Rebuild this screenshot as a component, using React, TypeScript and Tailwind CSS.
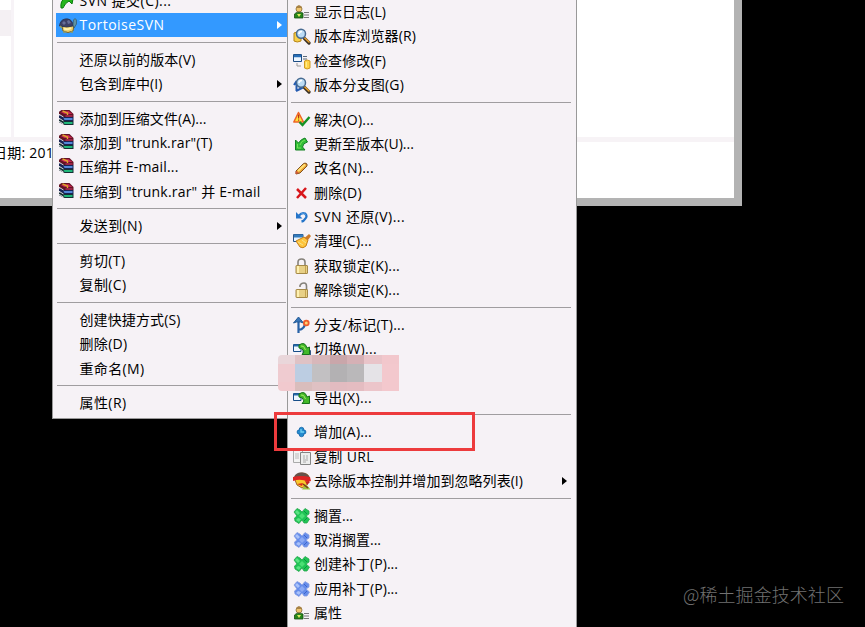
import { useLayoutEffect, useRef, useState } from "react";
import type { ReactNode } from "react";

type Item = {
    label: string;
    width: number;
    icon?: ReactNode;
    arrow?: boolean;
    active?: boolean;
};

type Entry = Item | "-";

const Icon = ({ children }: { children: ReactNode }) => (
    <svg viewBox="0 0 18 18" className="h-[18px] w-[18px]">
        {children}
    </svg>
);

const Commit = () => (
    <Icon>
        <path d="M2 16Q1 9 6 6L4 3L15 2L13 12L10 9Q6 11 4 16Z" fill="#25b51c" stroke="#087a0b" />
    </Icon>
);

const Tortoise = () => (
    <Icon>
        <path d="M3 10L15 9L14 15Q9 18 4 15Z" fill="#ecd06b" stroke="#7b6224" />
        <path d="M.5 10Q1 4 6 3Q12 2 14 8L14 10Q8 12 .5 10Z" fill="#3c4067" stroke="#27304c" strokeWidth=".8" />
        <path d="M3 7L5 5L7 7L5 9ZM8 5L10 4L12 7L9 8Z" fill="#666f98" />
        <path d="M14 9L14.5 4Q16 1 17.5 4V8L15 12Z" fill="#5f92a0" stroke="#31576b" strokeWidth=".7" />
        <path d="M5 12.5Q9 14 12 12" stroke="#fff2ac" strokeWidth="2" fill="none" />
        <path d="M1 10L3 12M4 16H7M12 16H14" stroke="#8d9c65" strokeWidth="1.5" />
    </Icon>
);

const Books = () => (
    <Icon>
        <g transform="translate(-1.5 -1)">
            <path d="M1 11L4 9L16 12V16H7L1 13Z" fill="#152f34" />
            <path d="M6 13H15V15H7Z" fill="#20b77a" />
            <path d="M1 7L4 5L16 8V12H7L1 9Z" fill="#182455" />
            <path d="M6 9H15V11H7Z" fill="#5487d8" />
            <path d="M1 3L4 1L12 1L16 5V8H7L1 5Z" fill="#631323" />
            <path d="M3 3L11 2L15 5H7Z" fill="#c72553" />
            <path d="M8 7H15" stroke="#d5376a" />
            <path d="M1 5L6 8M1 9L6 12M1 12L6 15" stroke="#eee" strokeWidth=".9" />
            <path d="M5 2L10 4V6" fill="none" stroke="#e0a62c" strokeWidth="1.4" />
        </g>
    </Icon>
);

const User = () => (
    <Icon>
        <circle cx="6" cy="6" r="3" fill="#efc46f" stroke="#795c25" strokeWidth=".7" />
        <path d="M3 5Q4 1 8 3L9 5" fill="#a98245" />
        <path d="M1.5 15V11Q4 8 10 10V15Z" fill="#258519" stroke="#164e12" strokeWidth=".8" />
        <path d="M4 11L6 14L8 11" fill="#ddeb64" />
        <path d="M11 9.5H16M11 12H16M11 14.5H16" stroke="#777" strokeWidth="1.2" />
    </Icon>
);

const Lens = () => (
    <>
        <path d="M11.5 11.5L16 16" stroke="#3e3325" strokeWidth="3.2" strokeLinecap="round" />
        <path d="M11.8 11L16 15" stroke="#e7a02c" strokeWidth="1.6" strokeLinecap="round" />
        <circle cx="8" cy="6.8" r="4.5" fill="#bcdcf5" stroke="#476a91" strokeWidth="1.5" />
        <path d="M6 7Q6 4.5 9 4.5" stroke="#fff" strokeWidth="1.5" fill="none" />
    </>
);

const Browser = () => (
    <Icon>
        <path d="M1 6Q4 4 8 6V14Q4 16 1 14Z" fill="#f7cf49" stroke="#b78517" />
        <Lens />
    </Icon>
);

const Graph = () => (
    <Icon>
        <path d="M1 9L3 6L5 9M3.5 6V15M3 15L9 12L5 9" fill="none" stroke="#245bb0" strokeWidth="2" />
        <Lens />
    </Icon>
);

const Check = () => (
    <Icon>
        <path d="M.5 2.5H8.5V9.5H.5Z" fill="#eef6ff" stroke="#1c4c83" />
        <path d="M1 4H8" stroke="#286eb7" strokeWidth="2.5" />
        <path d="M10 4.5H14M10 7H14" stroke="#596879" />
        <path d="M11.5 9Q14 7 17 9V16Q14 18 11.5 16Z" fill="#ffd449" stroke="#d29b20" />
        <path d="M4 11V14H8" fill="none" stroke="#999" />
        <path d="M13.3 10V15" stroke="#fff09a" />
    </Icon>
);

const Resolve = () => (
    <Icon>
        <path d="M5.5 1.5L10.5 11H.8Z" fill="#ffe23b" stroke="#ee6528" strokeWidth="1.5" strokeLinejoin="round" />
        <path d="M5.6 4V7.5M5.6 8.5V9.8" stroke="#b5331b" strokeWidth="1.2" />
        <path d="M6.5 11L9.5 14L16.5 6" fill="none" stroke="#159225" strokeWidth="2.4" />
    </Icon>
);

const Update = () => (
    <Icon>
        <path d="M2.5 5V15H12L9.5 12Q10 8 14.5 7L12 3Q8 4 5.5 8Z" fill="#31bd37" stroke="#128021" />
        <path d="M4.5 9V13H8M7 10Q8 6 12 5" fill="none" stroke="#76e258" />
    </Icon>
);

const Pencil = () => (
    <Icon>
        <path d="M3 12L10 5Q12 3 14 5L14 7L7 14L3 15Z" fill="#eca333" stroke="#81501e" />
        <path d="M5 12L12 5.5" stroke="#ffe075" strokeWidth="2" />
        <path d="M2.5 15L3 12L6 14Z" fill="#d4543a" />
    </Icon>
);

const Delete = () => (
    <Icon>
        <path d="M4 5L13 14M13 4L4 14" stroke="#d8161b" strokeWidth="2.5" />
    </Icon>
);

const Revert = () => (
    <Icon>
        <path d="M3 4V10.5H9.5Z" fill="#2575c9" />
        <path d="M6 7.5Q9 4 12 5.5Q15 8 12 11Q11 13 8.5 13.5" fill="none" stroke="#2575c9" strokeWidth="2.3" />
        <path d="M8 6Q11 4 13 7" fill="none" stroke="#5da5e7" strokeWidth=".8" />
    </Icon>
);

const Clean = () => (
    <Icon>
        <path d="M.5 2.5H10V9.5H.5Z" fill="#e7f3ff" stroke="#275385" />
        <path d="M1 4H10" stroke="#347cbd" strokeWidth="3" />
        <path d="M3 9L11 5L15 8L13 14Q10 17 7 15Z" fill="#ffc43c" stroke="#c58017" />
        <path d="M11.5 6L16 2L18 4L15 8Z" fill="#ce7b28" />
        <path d="M5 10L10 13M9 8L13 11" stroke="#f5e48b" />
    </Icon>
);

const Lock = ({ open }: { open?: boolean }) => (
    <Icon>
        <path
            d={open ? "M7 6V4.5Q8 2 11 2Q13.5 2 13.5 5V9" : "M5 9V5Q5 2 8.7 2Q12 2 12 5V9"}
            fill="none"
            stroke="#85817a"
            strokeWidth="1.6"
        />
        <rect x="3" y="8.5" width="11.5" height="8" rx=".5" fill="#e8d086" stroke="#a58947" />
        <path d="M5 9V16" stroke="#fff1b1" strokeWidth="2" />
        <path d="M12.5 9V16" stroke="#c5a34f" />
    </Icon>
);

const Branch = () => (
    <Icon>
        <path d="M5.5 17V4M5.5 14Q12 13 12 7" fill="none" stroke="#2761a6" strokeWidth="2.2" />
        <path d="M.5 7L5.5 1L10.5 7L7.5 6H3.5Z" fill="#3775b7" stroke="#235995" />
        <circle cx="13.3" cy="7" r="2.4" fill="#ffd071" stroke="#ed5b2d" strokeWidth="1.8" />
    </Icon>
);

const Export = ({ swap }: { swap?: boolean }) => (
    <Icon>
        <path d="M.5 4.5H8V11.5H.5Z" fill="#eef6ff" stroke="#164d88" />
        <path d="M1 5.5H8" stroke="#286ba7" strokeWidth="2" />
        {swap && <path d="M10 10.5H17.5V15H10Z" fill="#bfdcec" stroke="#315886" />}
        <path d="M6 5Q12 1 14 8L16.5 7V14.5H9L11 12Q10 8 6 8Z" fill="#43b929" stroke="#16711b" />
        <path d="M8 6Q11 5 12.5 10" stroke="#a4e767" fill="none" />
    </Icon>
);

const Add = () => (
    <Icon>
        <path d="M6.5 5Q8.5 3.5 10.5 5V7H12Q14 9 12 11H10.5V13Q8.5 14.5 6.5 13V11H5Q3 9 5 7H6.5Z" fill="#268bcf" stroke="#1266a9" strokeWidth=".8" />
        <path d="M8 6V9H11" stroke="#70d1f4" strokeWidth="1.3" fill="none" />
    </Icon>
);

const Copy = () => (
    <Icon>
        <path d="M.5 2.5H9.5V14.5H.5Z" fill="#f3f3f3" stroke="#aaa" />
        <path d="M2 6H6M2 8H6M2 10H6" stroke="#bbb" />
        <path d="M7.5 4.5H17.5V16.5H7.5Z" fill="#ededed" stroke="#858585" />
        <path d="M10 8H12M13 8H15M10 10H12M13 10H15M10 12H15M10 14H13" stroke="#aaa" />
    </Icon>
);

const Ignore = () => (
    <Icon>
        <path d="M2 8Q2 1 9 1Q17 1 16 8L14 13L9 16L4 13Z" fill="#f9c92c" stroke="#874514" strokeWidth=".8" />
        <path d="M1 5Q3 0 9 .5Q15 1 17 6L12 5Z" fill="#66524a" />
        <path d="M0 5Q8 3 17 5L18 9L15 10Q8 6 0 9Z" fill="#dd2424" />
        <path d="M4 12L10 11L9 14Z" fill="#d92c1c" />
        <path d="M12 9L17 10L14 13Z" fill="#c32320" />
        <path d="M10 16L13 12L17.5 17.5H9Z" fill="#9cc33f" />
        <path d="M10 12L15 16" stroke="#7c381c" strokeWidth="1.6" />
    </Icon>
);

const Patch = ({ blue }: { blue?: boolean }) => (
    <Icon>
        <path
            d="M1 5L4 1.5L7 3L9 5L12 1.5L16 4L16 7L13 9L16.5 12L14 16L11 16L9 13L6 16.5L2 14L1.5 11L4 9Z"
            fill={blue ? "#668dea" : "#20c455"}
            stroke={blue ? "#869de2" : "#26a64d"}
            strokeWidth=".8"
            strokeLinejoin="round"
        />
        <path d="M4 3L7 6L5 8L2 5ZM5 11L8 12L6 15L3 13Z" fill={blue ? "#a9c1fa" : "#5be383"} />
        <path d="M9 6L12 9L9 12L6 9Z" fill={blue ? "#8caaf3" : "#4bdf75"} />
        <path d="M11 4L14 7M11 14L14 11" stroke={blue ? "#3c64cd" : "#089640"} />
    </Icon>
);

const explorerMenu: Entry[] = [
    { label: "SVN 提交(C)...", width: 92, icon: <Commit /> },
    { label: "TortoiseSVN", width: 85, icon: <Tortoise />, arrow: true, active: true },
    "-",
    { label: "还原以前的版本(V)", width: 116 },
    { label: "包含到库中(I)", width: 83, arrow: true },
    "-",
    { label: "添加到压缩文件(A)...", width: 127, icon: <Books /> },
    { label: '添加到 "trunk.rar"(T)', width: 133, icon: <Books /> },
    { label: "压缩并 E-mail...", width: 99, icon: <Books /> },
    { label: '压缩到 "trunk.rar" 并 E-mail', width: 181, icon: <Books /> },
    "-",
    { label: "发送到(N)", width: 63, arrow: true },
    "-",
    { label: "剪切(T)", width: 46 },
    { label: "复制(C)", width: 47 },
    "-",
    { label: "创建快捷方式(S)", width: 101 },
    { label: "删除(D)", width: 48 },
    { label: "重命名(M)", width: 65 },
    "-",
    { label: "属性(R)", width: 47 },
];

const svnMenu: Entry[] = [
    { label: "显示日志(L)", width: 72, icon: <User /> },
    { label: "版本库浏览器(R)", width: 102, icon: <Browser /> },
    { label: "检查修改(F)", width: 72, icon: <Check /> },
    { label: "版本分支图(G)", width: 90, icon: <Graph /> },
    "-",
    { label: "解决(O)...", width: 60, icon: <Resolve /> },
    { label: "更新至版本(U)...", width: 100, icon: <Update /> },
    { label: "改名(N)...", width: 60, icon: <Pencil /> },
    { label: "删除(D)", width: 48, icon: <Delete /> },
    { label: "SVN 还原(V)...", width: 91, icon: <Revert /> },
    { label: "清理(C)...", width: 58, icon: <Clean /> },
    { label: "获取锁定(K)...", width: 86, icon: <Lock /> },
    { label: "解除锁定(K)...", width: 86, icon: <Lock open /> },
    "-",
    { label: "分支/标记(T)...", width: 91, icon: <Branch /> },
    { label: "切换(W)...", width: 63, icon: <Export swap /> },
    { label: "", width: 0 },
    { label: "导出(X)...", width: 58, icon: <Export /> },
    "-",
    { label: "增加(A)...", width: 58, icon: <Add /> },
    { label: "复制 URL", width: 60, icon: <Copy /> },
    { label: "去除版本控制并增加到忽略列表(I)", width: 209, icon: <Ignore />, arrow: true },
    "-",
    { label: "搁置...", width: 39, icon: <Patch /> },
    { label: "取消搁置...", width: 67, icon: <Patch blue /> },
    { label: "创建补丁(P)...", width: 84, icon: <Patch /> },
    { label: "应用补丁(P)...", width: 84, icon: <Patch blue /> },
    { label: "属性", width: 28, icon: <User /> },
];

// Spreads the letters so that the label takes exactly `width` pixels
function Label({ text, width }: { text: string; width: number }) {
    const ref = useRef<HTMLSpanElement>(null);
    const [spacing, setSpacing] = useState(0);

    useLayoutEffect(() => {
        if (!ref.current || !text) return;
        const natural = ref.current.getBoundingClientRect().width;
        setSpacing((width - natural) / text.length);
    }, [text, width]);

    return (
        <span ref={ref} className="whitespace-pre" style={{ letterSpacing: spacing }}>
            {text}
        </span>
    );
}

function Menu({ entries }: { entries: Entry[] }) {
    return (
        <div className="flex flex-col">
            {entries.map((entry, index) =>
                entry === "-" ? (
                    <div key={index} className="h-[10.3px] shrink-0 pt-[4.4px]">
                        <div className="mr-px ml-px h-px bg-[#a09da0]" />
                    </div>
                ) : (
                    <div
                        key={index}
                        className={`flex h-[24.33px] shrink-0 items-center ${entry.active ? "bg-[#3399ff] text-white" : "text-black"}`}
                    >
                        <div className="ml-[3px] flex w-[21px] shrink-0">{entry.icon}</div>
                        <Label text={entry.label} width={entry.width} />
                        {entry.arrow && (
                            <svg viewBox="0 0 5 8" className="mr-[5px] ml-auto h-2 w-[5px]">
                                <path d="M0 0L5 4L0 8Z" fill="currentColor" />
                            </svg>
                        )}
                    </div>
                )
            )}
        </div>
    );
}

export default function App() {
    return (
        <div className="relative h-[627px] w-[865px] overflow-hidden bg-black font-['Open_Sans','Noto_Sans_CJK_SC',sans-serif] text-[14px] leading-5">
            {/* Explorer window */}
            <div className="absolute top-0 left-0 flex h-[206px] w-[742px] flex-col border-r-8 border-b-8 border-[#b3b3b3] bg-white">
                <div className="flex h-[137px] shrink-0">
                    <div className="w-[11px] pt-[10px]">
                        <div className="h-[26px] bg-[#f4f0f3]" />
                    </div>
                    <div className="w-[3px] bg-[#f7f3f7]" />
                </div>
                <div className="h-[5px] shrink-0 bg-[#f7f3f6]" />
                <div className="-ml-[7px] pt-px text-black">
                    <Label text="日期: 201" width={61} />
                </div>
            </div>

            {/* Context menu */}
            <div className="absolute top-0 left-[52px] h-[419px] w-[236px] overflow-hidden border-r border-b border-l border-[#999] bg-[#f6f2f6] pl-[2.5px]">
                <div className="-mt-[11.3px]">
                    <Menu entries={explorerMenu} />
                </div>
            </div>

            {/* TortoiseSVN submenu */}
            <div className="absolute top-0 left-[287px] h-[627px] w-[290px] overflow-hidden border-x border-[#999] bg-[#f6f2f6] pr-[4px] pl-[2px]">
                <Menu entries={svnMenu} />
            </div>

            {/* Censored row */}
            <div className="absolute top-[355px] left-[278px] grid grid-cols-[17px_17px_18px_17px_17px_18px_17px] grid-rows-[9px_18px_9px] overflow-hidden rounded-l">
                <div className="bg-[#e9d6da]" />
                <div className="bg-[#dfc2c5]" />
                <div className="bg-[#d8b7ba]" />
                <div className="bg-[#c9a6aa]" />
                <div className="bg-[#d5b0b5]" />
                <div className="bg-[#e9c4c9]" />
                <div className="bg-[#f2c7cc]" />
                <div className="bg-[#efcbd0]" />
                <div className="bg-[#bccde2]" />
                <div className="bg-[#c2c0c2]" />
                <div className="bg-[#b3b1b3]" />
                <div className="bg-[#bab8ba]" />
                <div className="bg-[#e5e3e7]" />
                <div className="bg-[#f3c8cd]" />
                <div className="bg-[#f1c9ce]" />
                <div className="bg-[#d9bdbc]" />
                <div className="bg-[#dfc1c3]" />
                <div className="bg-[#e2bbc0]" />
                <div className="bg-[#e4bcc1]" />
                <div className="bg-[#ecc5ca]" />
                <div className="bg-[#f3c8cd]" />
            </div>

            {/* Highlight frame */}
            <div className="absolute top-[412px] left-[274px] h-[39px] w-[201px] border-[3px] border-[#ed3b3d]" />

            <div className="absolute top-[582px] left-[683px] font-['Noto_Sans_CJK_SC',sans-serif] text-[18px] leading-6 font-light text-[#727272]">
                <Label text="@稀土掘金技术社区" width={161} />
            </div>
        </div>
    );
}
